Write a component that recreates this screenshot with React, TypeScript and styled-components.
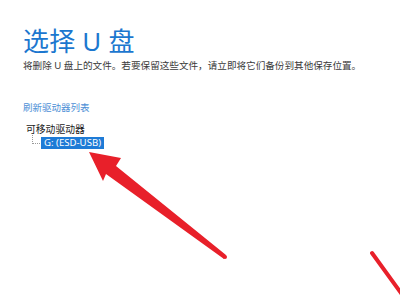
import React from "react";
import styled, { createGlobalStyle } from "styled-components";

const GlobalStyle = createGlobalStyle`
  html, body {
    margin: 0;
    padding: 0;
    background: #ffffff;
  }
  body {
    font-family: "Noto Sans", "Noto Sans CJK SC", sans-serif;
  }
`;

const Page = styled.div`
  position: relative;
  width: 400px;
  height: 300px;
  overflow: hidden;
  box-sizing: border-box;
  padding: 25px 0 0 23px;
  background: #ffffff;
`;

const Title = styled.h1`
  margin: 0;
  font-size: 26px;
  line-height: 32px;
  font-weight: 400;
  color: #1c77cf;
  letter-spacing: 0.2px;
`;

const Subtitle = styled.p`
  margin: 2px 0 0;
  font-size: 9.6px;
  line-height: 13px;
  color: #3a3a3a;
  white-space: nowrap;
`;

const RefreshLink = styled.a`
  display: block;
  margin-top: 29px;
  font-size: 9.5px;
  line-height: 13px;
  color: #4d8fd6;
  text-decoration: none;
`;

const Tree = styled.div`
  margin-top: 10px;
  padding-left: 3px;
`;

const GroupLabel = styled.div`
  font-size: 9.8px;
  line-height: 11px;
  color: #1a1a1a;
`;

const Branch = styled.div`
  display: flex;
  align-items: flex-end;
  padding-left: 6px;
`;

const Connector = styled.span`
  width: 8px;
  height: 9px;
  margin-bottom: 5px;
  border-left: 1px dotted #9a9a9a;
  border-bottom: 1px dotted #9a9a9a;
  box-sizing: border-box;
`;

const DriveItem = styled.span<{ $selected?: boolean }>`
  margin-left: 1px;
  padding: 0 3px;
  height: 12px;
  line-height: 12px;
  font-family: "Noto Sans", "DejaVu Sans", sans-serif;
  font-size: 9.6px;
  background: ${(p) => (p.$selected ? "#1e7bd6" : "transparent")};
  color: ${(p) => (p.$selected ? "#ffffff" : "#1a1a1a")};
  white-space: nowrap;
`;

const Annotation = styled.svg`
  position: absolute;
  left: 0;
  top: 0;
  pointer-events: none;
`;

export default function App() {
  return (
    <>
      <GlobalStyle />
      <Page>
        <Title>选择 U 盘</Title>
        <Subtitle>将删除 U 盘上的文件。若要保留这些文件，请立即将它们备份到其他保存位置。</Subtitle>
        <RefreshLink href="#">刷新驱动器列表</RefreshLink>
        <Tree>
          <GroupLabel>可移动驱动器</GroupLabel>
          <Branch>
            <Connector />
            <DriveItem $selected>G: (ESD-USB)</DriveItem>
          </Branch>
        </Tree>
        <Annotation width="400" height="300" viewBox="0 0 400 300">
          <polygon
            points="89,152 121,158 116,166 226,255 224,259 106,174 103,181"
            fill="#e8202a"
          />
          <circle cx="225" cy="257" r="2" fill="#e8202a" />
          <line
            x1="372"
            y1="253"
            x2="406"
            y2="300"
            stroke="#e8202a"
            strokeWidth="4"
            strokeLinecap="round"
          />
        </Annotation>
      </Page>
    </>
  );
}
